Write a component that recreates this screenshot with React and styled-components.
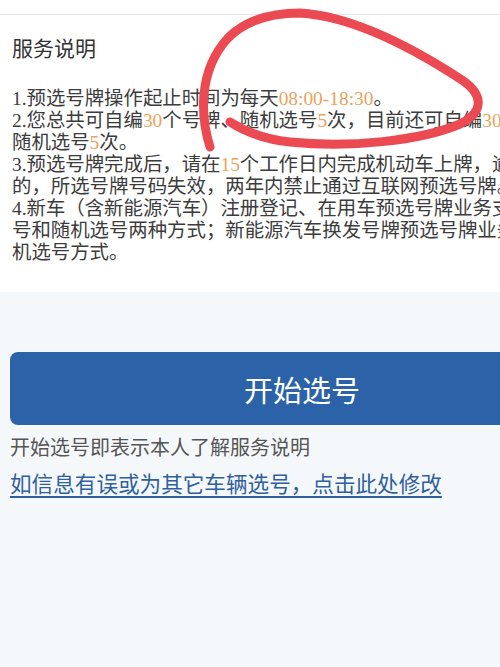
import React from "react";
import styled, { createGlobalStyle } from "styled-components";

const GlobalStyle = createGlobalStyle`
  html, body {
    margin: 0;
    padding: 0;
    overflow: hidden;
    background: #f5f8fa;
  }
`;

const Page = styled.div`
  position: relative;
  width: 604px;
  min-height: 667px;
  background: #f5f8fa;
  font-family: "Noto Sans CJK SC", "Noto Sans", sans-serif;
`;

const TopBar = styled.div`
  height: 14px;
  background: #ffffff;
  border-bottom: 1px solid #e2e4e6;
`;

const Card = styled.section`
  background: #ffffff;
  padding: 17px 12px 28px;
`;

const Title = styled.h2`
  margin: 0;
  font-size: 21px;
  line-height: 30px;
  font-weight: 400;
  color: #333333;
`;

const Notes = styled.div`
  margin-top: 26px;
  font-family: "Liberation Serif", "Noto Sans CJK SC", serif;
  font-size: 19.4px;
  line-height: 22px;
  color: #3c3c3c;
`;

const Line = styled.div`
  white-space: nowrap;
`;

const Num = styled.span`
  color: #e8a35e;
`;

const Actions = styled.section`
  padding: 60px 10px 0;
`;

const StartButton = styled.button`
  display: flex;
  align-items: center;
  justify-content: center;
  width: 100%;
  height: 73px;
  border: none;
  border-radius: 8px;
  background: #2c62a8;
  color: #ffffff;
  font-family: "Noto Sans CJK SC", sans-serif;
  font-size: 29px;
  cursor: pointer;
`;

const Hint = styled.p`
  margin: 9px 0 0;
  font-size: 20px;
  line-height: 26px;
  color: #555555;
`;

const EditLink = styled.a`
  display: inline-block;
  margin-top: 10px;
  font-size: 21.6px;
  line-height: 26px;
  color: #2f5f9e;
  text-decoration: underline;
  text-underline-offset: 4px;
`;

const Scribble = styled.svg`
  position: absolute;
  left: 0;
  top: 0;
  pointer-events: none;
`;

const App = () => {
  return (
    <Page>
      <GlobalStyle />
      <TopBar />
      <Card>
        <Title>服务说明</Title>
        <Notes>
          <Line>
            1.预选号牌操作起止时间为每天<Num>08:00-18:30</Num>。
          </Line>
          <Line>
            2.您总共可自编<Num>30</Num>个号牌、随机选号<Num>5</Num>次，目前还可自编<Num>30</Num>个号牌、
          </Line>
          <Line>
            随机选号<Num>5</Num>次。
          </Line>
          <Line>
            3.预选号牌完成后，请在<Num>15</Num>个工作日内完成机动车上牌，逾期未上牌
          </Line>
          <Line>的，所选号牌号码失效，两年内禁止通过互联网预选号牌。</Line>
          <Line>4.新车（含新能源汽车）注册登记、在用车预选号牌业务支持自编选</Line>
          <Line>号和随机选号两种方式；新能源汽车换发号牌预选号牌业务只支持随</Line>
          <Line>机选号方式。</Line>
        </Notes>
      </Card>
      <Actions>
        <StartButton>开始选号</StartButton>
        <Hint>开始选号即表示本人了解服务说明</Hint>
        <EditLink href="#">如信息有误或为其它车辆选号，点击此处修改</EditLink>
      </Actions>
      <Scribble width="604" height="200" viewBox="0 0 604 200">
        <path
          d="M210,147 C201,118 197,72 228,38 C246,20 270,13 300,13 C350,16 410,46 462,80 C484,95 484,112 460,124 C420,141 350,148 290,142 C262,139 244,131 230,122"
          fill="none"
          stroke="#ec4a52"
          strokeWidth="9"
          strokeLinecap="round"
          strokeLinejoin="round"
        />
      </Scribble>
    </Page>
  );
};

export default App;
